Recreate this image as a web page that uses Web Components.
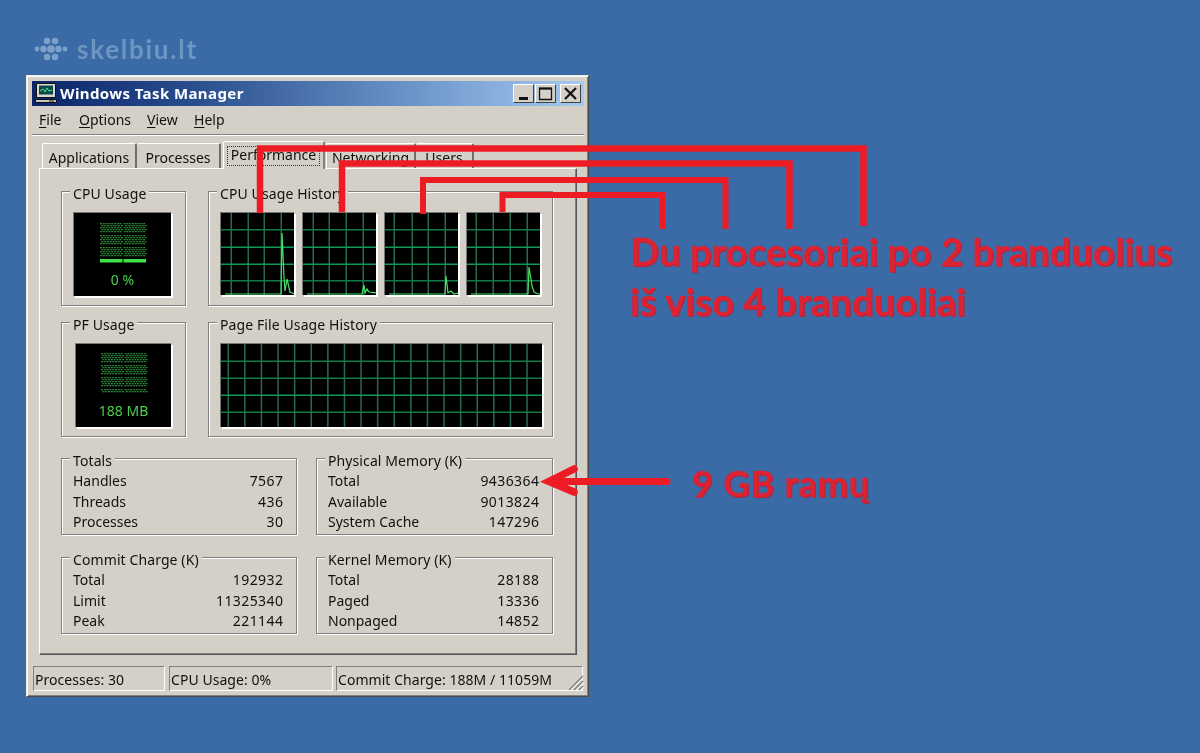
<!DOCTYPE html>
<html lang="lt"><head><meta charset="utf-8"><title>Windows Task Manager</title>
<style>
html,body{margin:0;height:753px;overflow:hidden;background:#3b6ba6}
</style></head><body>
<desk-top>
  <site-mark></site-mark>
  <task-window>
    <group-box slot="cpu" label="CPU Usage" pad="12"><usage-meter w="98" value="0 %" lit="1" barx="26"></usage-meter></group-box>
    <group-box slot="cpuhist" label="CPU Usage History" pad="12">
      <div style="display:flex;gap:8px">
        <hist-graph w="74" h="83" vx="10,27,43,60" points="4,81 60,81 61,20 63,64 64,78 66,66 69,79 74,81"></hist-graph>
        <hist-graph w="74" h="83" vx="10,26,43,60" points="4,81 59,81 61,72 62,80 64,76 66,79 74,80"></hist-graph>
        <hist-graph w="74" h="83" vx="9,27,43,60" points="4,81 60,81 61,63 63,80 66,78 69,81 74,80"></hist-graph>
        <hist-graph w="74" h="83" vx="9,26,43,60" points="4,81 61,81 62,54 65,73 67,79 71,81 74,81"></hist-graph>
      </div>
    </group-box>
    <group-box slot="pf" label="PF Usage" pad="14"><usage-meter w="96" value="188 MB" barx="25"></usage-meter></group-box>
    <group-box slot="pfhist" label="Page File Usage History" pad="12">
      <hist-graph w="322" h="84" vx="7,23.6,40.2,56.8,73.4,90,106.6,123.2,139.8,156.4,173,189.6,206.2,222.8,239.4,256,272.6,289.2,305.8" points=""></hist-graph>
    </group-box>
    <group-box slot="totals" label="Totals" pad="12" padr="14">
      <stat-row name="Handles" val="7567"></stat-row><stat-row name="Threads" val="436"></stat-row><stat-row name="Processes" val="30"></stat-row>
    </group-box>
    <group-box slot="phys" label="Physical Memory (K)" pad="12" padr="14">
      <stat-row name="Total" val="9436364"></stat-row><stat-row name="Available" val="9013824"></stat-row><stat-row name="System Cache" val="147296"></stat-row>
    </group-box>
    <group-box slot="commit" label="Commit Charge (K)" pad="12" padr="14">
      <stat-row name="Total" val="192932"></stat-row><stat-row name="Limit" val="11325340"></stat-row><stat-row name="Peak" val="221144"></stat-row>
    </group-box>
    <group-box slot="kernel" label="Kernel Memory (K)" pad="12" padr="14">
      <stat-row name="Total" val="28188"></stat-row><stat-row name="Paged" val="13336"></stat-row><stat-row name="Nonpaged" val="14852"></stat-row>
    </group-box>
  </task-window>
  <red-notes></red-notes>
</desk-top>
<script>
const def=(n,html,extra)=>customElements.define(n,class extends HTMLElement{
  constructor(){super();this.attachShadow({mode:'open'}).innerHTML=html}
  connectedCallback(){extra&&extra.call(this,this.shadowRoot)}
});

def('desk-top',`<style>:host{display:block;position:relative;width:1200px;height:753px;overflow:hidden;background:#3b6ba6}</style><slot></slot>`);

def('site-mark',`<style>
:host{position:absolute;left:34px;top:34px;display:flex;align-items:center;gap:8px;color:#6f96c2;font:700 26px/30px Lato,sans-serif;letter-spacing:1.75px;filter:blur(.4px)}
svg{display:block}
</style><svg width="35" height="28" viewBox="0 0 35 28" fill="#7ea1ca">
<circle cx="3" cy="14" r="2.400"/><circle cx="9.500" cy="14" r="3.200"/><circle cx="17" cy="14" r="3.800"/><circle cx="24.500" cy="14" r="3.200"/><circle cx="31" cy="14" r="2.400"/>
<circle cx="13" cy="6" r="3.200"/><circle cx="21" cy="6" r="3.200"/><circle cx="13" cy="22" r="3.200"/><circle cx="21" cy="22" r="3.200"/></svg><span>skelbiu.lt</span>`);

def('task-window',`<style>
:host{position:absolute;left:26px;top:75px;width:563px;height:622px;box-sizing:border-box;background:#d4d0c8;
 border:1px solid;border-color:#eeece6 #4a4a48 #4a4a48 #eeece6;box-shadow:inset 1px 1px 0 #fff,inset -1px -1px 0 #808080;
 padding:5px 4px 0 5px;display:flex;flex-direction:column;color:#111;font:14px/18px "Noto Sans",sans-serif;filter:blur(.3px)}
.title{height:25px;flex:none;display:flex;align-items:center;color:#fff;font-weight:700;font-size:15px;letter-spacing:.4px;
 background:linear-gradient(90deg,#0a246a 0%,#2a4f8f 30%,#6d97cb 70%,#a6caf0 100%);padding:0 3px 1px 2px;box-sizing:border-box}
.title svg.ic{margin-right:2px;flex:none}
.title span{flex:1}
.btn{width:21px;height:19px;box-sizing:border-box;background:#d4d0c8;border:1px solid;border-color:#fff #404040 #404040 #fff;flex:none;display:block;margin-left:1px}
.btn.x{margin-left:4px}
.menu{height:28px;flex:none;display:flex;align-items:center;padding-left:7px;font-size:14px}
.menu span{display:inline-block}
.menu u{text-underline-offset:2px}
.sep{height:1px;flex:none;background:#808080;border-bottom:1px solid #fff;margin-bottom:5px;width:552px}
.tabs{display:flex;margin-left:10px;height:27px;flex:none;position:relative;z-index:1;align-items:flex-start}
.tab{box-sizing:border-box;height:25px;margin-top:2px;border-top:1px solid #fff;border-left:1px solid #fff;border-right:2px solid #6e6e6a;text-align:center;line-height:27px;white-space:nowrap;background:#d4d0c8;border-radius:2px 2px 0 0}
.tab.sel{height:28px;margin-top:0;line-height:24px;border-right-color:#808080;position:relative;margin-left:2px;margin-right:1px}
.tab.sel i{font-style:normal;display:block;margin:4px 3px 0;height:20px;line-height:17px;outline:1px dotted #333;outline-offset:-1px}
.panel{margin-left:7px;width:538px;height:487px;box-sizing:border-box;flex:none;border:1px solid;border-color:#fff #555 #555 #fff;box-shadow:inset -1px -1px 0 #808080;padding:22px 23px 19px 21px;display:flex;flex-direction:column}
.r{display:flex}
.top{gap:22px;height:115px}
.low{gap:19px;height:77px}
.status{margin-top:11px;height:26px;display:flex;flex:none;position:relative;font-size:14px;width:552px;letter-spacing:.05px}
.cell{box-sizing:border-box;height:25px;border:1px solid;border-color:#808080 #fff #fff #808080;padding:0 1px;line-height:25px;white-space:nowrap;margin-left:1px}
.grip{position:absolute;right:0;bottom:1px}
</style>
<div class="title">
<svg class="ic" width="24" height="22" viewBox="0 0 24 22"><path fill="#d8d8d0" stroke="#111" d="M2.500 1.500h19v14h-19z"/><path fill="#084a4a" d="M5 3.500h14v9H5z"/><path fill="none" stroke="#5fe08a" d="M6 9l3-2 2 3 2-4 2 3 3-1"/><path fill="#c8c8c0" stroke="#111" d="M1.500 17.500h21v3h-21z"/><path fill="#222" d="M15 18.500h5v1h-5z"/></svg>
<span>Windows Task Manager</span>
<svg class="btn" viewBox="0 0 19 17"><path fill="#111" d="M5 12h9v3H5z"/></svg>
<svg class="btn" viewBox="0 0 19 17"><path fill="none" stroke="#111" stroke-width="1.300" d="M3.500 3.500h12v11h-12z"/><path fill="#111" d="M3 2.500h13v2H3z"/></svg>
<svg class="btn x" viewBox="0 0 19 17"><path stroke="#111" stroke-width="2.200" d="M4 3l11 11M15 3L4 14"/></svg>
</div>
<div class="menu"><span style="width:40px"><u>F</u>ile</span><span style="width:68px"><u>O</u>ptions</span><span style="width:47px"><u>V</u>iew</span><span><u>H</u>elp</span></div>
<div class="sep"></div>
<div class="tabs">
<div class="tab" style="width:95px">Applications</div><div class="tab" style="width:84px;border-left:0">Processes</div>
<div class="tab sel" style="width:102px"><i>Performance</i></div>
<div class="tab" style="width:90px">Networking</div><div class="tab" style="width:58px;border-left:0">Users</div>
</div>
<div class="panel">
<div class="r top"><slot name="cpu"></slot><slot name="cpuhist"></slot></div>
<div class="r top" style="margin-top:16px"><slot name="pf"></slot><slot name="pfhist"></slot></div>
<div class="r low" style="margin-top:21px"><slot name="totals"></slot><slot name="phys"></slot></div>
<div class="r low" style="margin-top:22px"><slot name="commit"></slot><slot name="kernel"></slot></div>
</div>
<div class="status">
<div class="cell" style="width:132px">Processes: 30</div><div class="cell" style="width:164px;margin-left:4px">CPU Usage: 0%</div><div class="cell" style="width:247px;margin-left:3px">Commit Charge: 188M / 11059M</div>
<svg class="grip" width="17" height="16" viewBox="0 0 17 16"><path stroke="#808080" stroke-width="1.400" d="M2 15L16 1M7 15l9-9M12 15l4-4"/><path stroke="#fff" d="M3.500 15.500L16.500 2.500M8.500 15.500l8-8M13.500 15.500l3-3"/></svg>
</div>`,function(){
  const w={cpu:125,pf:125,cpuhist:345,pfhist:345,totals:236,commit:236,phys:237,kernel:237};
  this.querySelectorAll('group-box').forEach(g=>{g.style.width=w[g.slot]+'px'});
});

def('group-box',`<style>
:host{display:flex;flex-direction:column;box-sizing:border-box;border:1px solid #808080;box-shadow:1px 1px 0 #fff,inset 1px 1px 0 #fff;flex:none}
.l{align-self:flex-start;margin:-7px 0 0 8px;padding:0 3px;background:#d4d0c8;line-height:18px;white-space:nowrap;letter-spacing:.1px}
.c{padding-top:1px}
</style><div class="l"></div><div class="c"><slot></slot></div>`,function(s){
  s.querySelector('.l').textContent=this.getAttribute('label');
  const c=s.querySelector('.c');
  c.style.paddingLeft=(+this.getAttribute('pad')-1)+'px';
  c.style.paddingRight=((+this.getAttribute('padr')||0)-1)+'px';
  if(!this.hasAttribute('padr')) c.style.paddingTop='9px';
});

def('stat-row',`<style>
:host{display:flex;justify-content:space-between;height:20.7px;line-height:20.7px}
b{font-weight:400;letter-spacing:.42px;margin-right:-.4px}
</style><span></span><b></b>`,function(s){
  s.querySelector('span').textContent=this.getAttribute('name');
  s.querySelector('b').textContent=this.getAttribute('val');
});

def('hist-graph',`<style>
:host{display:block;box-sizing:border-box;flex:none;background:#000;border-top:1px solid #777;border-left:1px solid #777;box-shadow:2px 2px 0 #fff}
svg{display:block}
</style><svg></svg>`,function(s){
  const w=+this.getAttribute('w'),h=+this.getAttribute('h');
  this.style.width=w+'px';this.style.height=h+'px';
  const v=this.getAttribute('vx').split(',').map(Number),sv=s.querySelector('svg');
  sv.setAttribute('width',w-1);sv.setAttribute('height',h-1);
  let m='';
  v.forEach(x=>m+=`<rect x="${x-.5}" y="0" width="1.5" height="${h}" fill="#2a6a4c"/>`);
  const small=h===83;
  const ys=small?[16,33.500,50.500,67]:[16.500,33.500,50.500,67.500];
  ys.forEach((y,i)=>{
    const bright=small?(i===1||i===2):i===2;
    m+=`<rect x="0" y="${y}" width="${w}" height="1.500" fill="${bright?'#0f9a58':'#127a48'}"/>`;
  });
  const p=this.getAttribute('points');
  if(p)m+=`<polyline fill="none" stroke="#48e068" stroke-width="1.200" points="${p}"/>`;
  sv.innerHTML=m;
});

def('usage-meter',`<style>
:host{display:flex;flex-direction:column;box-sizing:border-box;height:84px;background:#000;border-top:1px solid #777;border-left:1px solid #777;box-shadow:2px 2px 0 #fff;color:#4bd04b;text-align:center;font:14px/16px "Noto Sans",sans-serif}
svg{display:block;flex:none}
span{display:block;margin-top:2px}
</style><svg height="57" viewBox="0 0 98 57"></svg><span></span>`,function(s){
  const w=+this.getAttribute('w'),x=+this.getAttribute('barx');
  this.style.width=w+'px';
  const sv=s.querySelector('svg');sv.setAttribute('width',w-1);
  sv.setAttribute('viewBox',`0 0 ${w-1} 57`);
  const lit=this.hasAttribute('lit');
  let m='';
  const rows=lit?18:20,start=lit?10:9;
  for(let c=0;c<2;c++){
    const x0=x+c*23.5;
    for(let r=0;r<rows;r++){
      if(r%6===5)continue;
      for(let k=0;k<8;k++){
        m+=`<rect x="${x0+k*2.800+(r%2?1.400:0)}" y="${start+r*2}" width="2" height="1.300" fill="#2a8236"/>`;
      }
    }
    if(lit)m+=`<rect x="${x0}" y="46" width="22.500" height="3.500" fill="#3ee04a"/>`;
  }
  sv.innerHTML=m;
  s.querySelector('span').textContent=this.getAttribute('value');
});

def('red-notes',`<style>
:host{position:absolute;inset:0;display:block;pointer-events:none}
svg{position:absolute;left:0;top:0}
p{position:absolute;margin:0;white-space:nowrap;color:#dc2233;font:700 38.400px/44px Lato,sans-serif;text-shadow:1px 1px 0 #a8283f;filter:blur(.3px);-webkit-text-stroke:.3px #dc2233}
</style>
<svg width="1200" height="753" fill="none" stroke="#ed1c24" stroke-linejoin="miter">
<path stroke-width="6.500" d="M260 213V148.500H863.500V226"/>
<path stroke-width="6.500" d="M342 212V163.500H789.500V229"/>
<path stroke-width="6" d="M423 214V180H725.500V229"/>
<path stroke-width="6" d="M502.500 212V195H662.500V229"/>
<path stroke-width="7" stroke-linecap="round" d="M667 481.500H552"/>
<path stroke-width="7.500" stroke-linecap="round" d="M574 469L549 481.500L574 492"/>
</svg>
<p style="left:630px;top:229px">Du procesoriai po 2 branduolius</p>
<p style="left:630px;top:279px">iš viso 4 branduoliai</p>
<p style="left:692px;top:461px;font-size:36.500px;letter-spacing:.6px">9 GB ramų</p>`);
</script>
</body></html>
